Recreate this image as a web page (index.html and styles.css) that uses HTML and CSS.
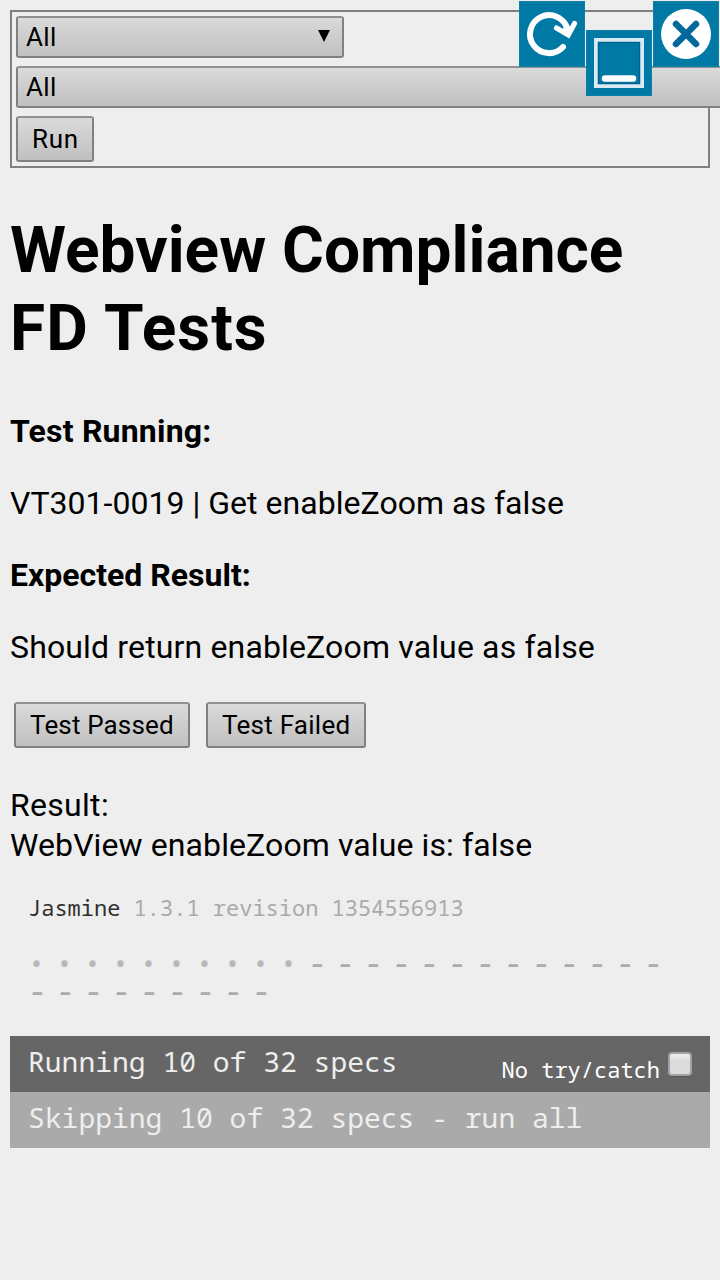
FILE: index.html
```
<!DOCTYPE html>
<html lang="en">
<head>
<meta charset="utf-8">
<title>Webview Compliance FD Tests</title>
<link rel="stylesheet" href="styles.css">
</head>
<body>
<form class="filters">
  <div class="select select-short"><span class="t-all">All</span><svg class="arrow" width="12" height="12" viewBox="0 0 12 12"><path d="M0 0H12L6 12Z"/></svg></div>
  <div class="select select-long"><span class="t-all">All</span></div>
  <button class="button run" type="button"><span class="t-run">Run</span></button>
</form>

<h1 class="title"><span class="t-title1">Webview Compliance</span><br><span class="t-title2">FD Tests</span></h1>

<p class="label"><span class="t-running">Test Running:</span></p>
<p class="text"><span class="t-name">VT301-0019 | Get enableZoom as false</span></p>
<p class="label"><span class="t-expected">Expected Result:</span></p>
<p class="text"><span class="t-should">Should return enableZoom value as false</span></p>

<div class="actions">
  <button class="button passed" type="button"><span class="t-passed">Test Passed</span></button>
  <button class="button failed" type="button"><span class="t-failed">Test Failed</span></button>
</div>

<div class="result"><span class="t-result">Result:</span><br><span class="t-value">WebView enableZoom value is: false</span></div>

<section class="reporter">
  <div class="banner"><span class="name">Jasmine</span> <span class="version">1.3.1 revision 1354556913</span></div>
  <ul class="symbols">
    <li class="dot">•</li><li class="dot">•</li><li class="dot">•</li><li class="dot">•</li><li class="dot">•</li><li class="dot">•</li><li class="dot">•</li><li class="dot">•</li><li class="dot">•</li><li class="dot">•</li>
    <li>-</li><li>-</li><li>-</li><li>-</li><li>-</li><li>-</li><li>-</li><li>-</li><li>-</li><li>-</li><li>-</li><li>-</li><li>-</li>
    <li>-</li><li>-</li><li>-</li><li>-</li><li>-</li><li>-</li><li>-</li><li>-</li><li>-</li>
  </ul>
  <div class="bar running"><span>Running 10 of 32 specs</span><label class="option"><span>No try/catch</span><i class="check"></i></label></div>
  <div class="bar skipping"><span>Skipping 10 of 32 specs - run all</span></div>
</section>

<nav class="controls">
  <svg class="control" width="66" height="66" viewBox="0 0 66 66" fill="none" stroke="#fff">
    <path d="M44 46A19 19 0 1 1 48.3 28" stroke-width="6" stroke-linecap="round"/>
    <path d="M37.5 27L49.3 34L55.5 22.5" stroke-width="5.2" stroke-linecap="round"/>
    <path d="M43 29L49.3 34L53 26L47 24Z" fill="#fff" stroke="none"/>
  </svg>
  <svg class="control minimize" width="66" height="66" viewBox="0 0 66 66" fill="none">
    <rect x="10" y="10" width="46" height="46" stroke="#d8ebf4" stroke-width="4"/>
    <rect x="12.5" y="12.5" width="41" height="41" stroke="#00638f" stroke-width="1.5"/>
    <path d="M19 48.5H47" stroke="#fff" stroke-width="6.5" stroke-linecap="round"/>
  </svg>
  <svg class="control" width="66" height="66" viewBox="0 0 66 66" fill="none">
    <circle cx="33" cy="33" r="25" fill="#fff"/>
    <path d="M23 23L43 43M43 23L23 43" stroke="#00699a" stroke-width="6.5" stroke-linecap="round"/>
  </svg>
</nav>
</body>
</html>
```
FILE: styles.css
```
* { box-sizing: border-box; }
html, body { height: 100%; overflow: hidden; }
body {
  margin: 0;
  padding: 10px;
  position: relative;
  background: #eee;
  color: #000;
  font: 32px/40px Roboto, sans-serif;
  white-space: nowrap;
}
.filters {
  height: 158px;
  padding: 4px;
  border: 2px solid #808080;
  display: flex;
  flex-direction: column;
  align-items: flex-start;
  gap: 8px;
}
.select, .button {
  border: 2px solid #808080;
  border-top-color: #919191;
  border-radius: 3px;
  background: linear-gradient(#dadada, #c0c0c0);
  color: #000;
  font: 26px/38px Roboto, sans-serif;
}
.select {
  height: 42px;
  flex: none;
  padding: 0 12px 0 8px;
  display: flex;
  justify-content: space-between;
}
.select-short { width: 328px; }
.select-long { width: 704px; border-right: 0; border-radius: 3px 0 0 3px; }
.arrow { margin-top: 12px; }
.button { height: 46px; padding: 0 0 0 14px; text-align: left; flex: none; line-height: 40px; }
.run { width: 78px; }
.passed { width: 176px; }
.failed { width: 160px; }
.title { margin: 44px 0 0; font-size: 64px; line-height: 78px; font-weight: 700; }
.label, .text { margin: 0 0 32px; }
.label { font-weight: 700; }
.title + .label { margin-top: 43px; }
.actions { display: flex; gap: 16px; padding-left: 4px; margin-top: 35px; }
.result { margin-top: 37px; }

.t-all, .t-result { letter-spacing: .3px; }
.t-run { letter-spacing: .7px; }
.t-title2 { letter-spacing: 1px; }
.t-running { letter-spacing: .2px; }
.t-name { letter-spacing: .03px; }
.t-should, .t-passed { letter-spacing: .15px; }
.t-failed { letter-spacing: .25px; }
.t-value { letter-spacing: .1px; }

.reporter { margin-top: 24px; font-family: "Droid Sans Mono", "Noto Sans Mono", "DejaVu Sans Mono", monospace; }
.banner { padding-left: 18px; font-size: 22px; line-height: 36px; color: #aaa; }
.name { color: #303030; }
.symbols {
  list-style: none;
  margin: 24px 0 31px;
  padding: 0 18px;
  display: flex;
  flex-wrap: wrap;
  width: 700px;
  color: #aaa;
  font-size: 31px;
  font-weight: 500;
  line-height: 26px;
}
.symbols li { width: 28px; height: 28px; }
.symbols .dot { color: #b8b8b8; font-size: 28px; font-weight: 400; line-height: 28px; }
.bar {
  height: 56px;
  padding: 0 18px;
  display: flex;
  justify-content: space-between;
  font-size: 28px;
  line-height: 50px;
  color: #eee;
}
.running { background: #666; }
.skipping { background: #aaa; }
.option { display: flex; gap: 8px; font-size: 22px; line-height: 67px; height: 56px; color: #fff; }
.check {
  width: 24px;
  height: 24px;
  margin-top: 16px;
  border: 2px solid #a3a3a3;
  border-radius: 4px;
  background: linear-gradient(#eee, #dcdcdc 35%);
  box-shadow: 0 1px 1px #555;
}
.controls { position: absolute; top: 1px; left: 519px; display: flex; gap: 1px; }
.control { background: #0079a5; flex: none; box-shadow: inset 0 0 0 1px #0d80aa; }
.minimize { margin-top: 29px; }
```
